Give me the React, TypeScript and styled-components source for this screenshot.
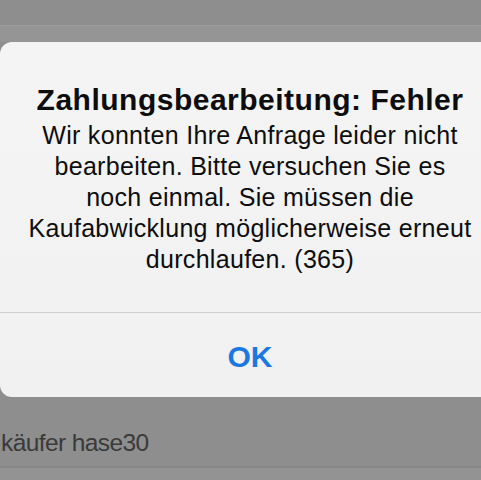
import React from 'react';
import styled, { createGlobalStyle } from 'styled-components';

const GlobalStyle = createGlobalStyle`
  html, body {
    margin: 0;
    padding: 0;
    background: #8e8e8e;
  }
  body {
    font-family: "Liberation Sans", Arial, sans-serif;
  }
`;

const Screen = styled.div`
  width: 481px;
  height: 480px;
  overflow: hidden;
  display: flex;
  flex-direction: column;
  background: #8e8e8e;
`;

const TopBar = styled.div`
  height: 25px;
  flex-shrink: 0;
  background: #8e8e8e;
  border-bottom: 1px solid #9c9c9c;
`;

const TopBand = styled.div`
  height: 16px;
  flex-shrink: 0;
  background: #959595;
`;

const Alert = styled.div`
  width: 500px;
  height: 355px;
  flex-shrink: 0;
  border-radius: 12px 0 0 12px;
  background: linear-gradient(#f4f4f4, #f1f1f1);
  display: flex;
  flex-direction: column;
`;

const AlertBody = styled.div`
  height: 271px;
  box-sizing: border-box;
  padding-top: 41px;
  border-bottom: 1px solid #cfcfcf;
  display: flex;
  flex-direction: column;
  align-items: center;
  text-align: center;
  color: #0d0d0d;
`;

const Title = styled.div`
  font-size: 30px;
  font-weight: bold;
  line-height: 34px;
  letter-spacing: 0.5px;
`;

const Message = styled.div`
  margin-top: 3px;
  font-size: 25px;
  line-height: 31px;
  letter-spacing: 0.3px;
  white-space: nowrap;
`;

const OkButton = styled.button`
  flex: 1;
  border: none;
  background: transparent;
  font-family: "Liberation Sans", Arial, sans-serif;
  font-size: 30px;
  font-weight: bold;
  color: #1a78e0;
  padding: 4px 0 0;
  cursor: pointer;
`;

const ListRow = styled.div`
  height: 71px;
  flex-shrink: 0;
  box-sizing: border-box;
  border-bottom: 2px solid #878787;
  display: flex;
  align-items: flex-end;
  padding: 0 0 9px 1px;
  font-size: 24.5px;
  line-height: 28px;
  color: #3a3a3a;
  letter-spacing: -0.6px;
`;

const ListRest = styled.div`
  flex: 1;
  background: #939393;
`;

export default function App() {
  return (
    <>
      <GlobalStyle />
      <Screen>
        <TopBar />
        <TopBand />
        <Alert>
          <AlertBody>
            <Title>Zahlungsbearbeitung: Fehler</Title>
            <Message>
              Wir konnten Ihre Anfrage leider nicht
              <br />
              bearbeiten. Bitte versuchen Sie es
              <br />
              noch einmal. Sie müssen die
              <br />
              Kaufabwicklung möglicherweise erneut
              <br />
              durchlaufen. (365)
            </Message>
          </AlertBody>
          <OkButton>OK</OkButton>
        </Alert>
        <ListRow>käufer hase30</ListRow>
        <ListRest />
      </Screen>
    </>
  );
}
